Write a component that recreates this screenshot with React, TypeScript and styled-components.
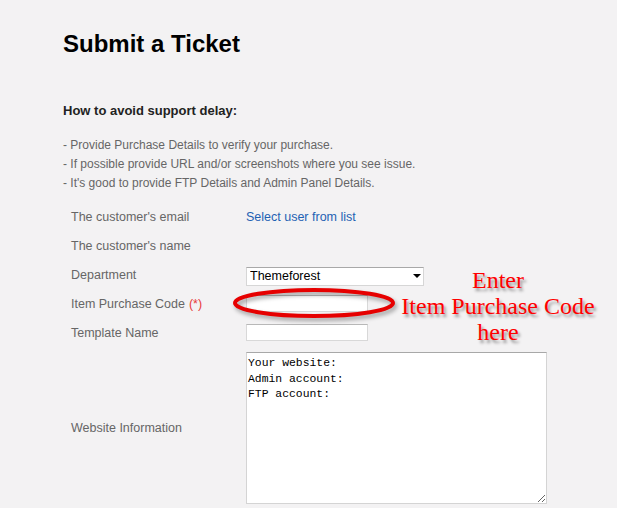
import React from "react";
import styled, { createGlobalStyle } from "styled-components";

const GlobalStyle = createGlobalStyle`
  html, body { margin: 0; padding: 0; background: #f3f2f3; }
  body { font-family: "Liberation Sans", Arial, sans-serif; }
  * { box-sizing: border-box; }
`;

const Page = styled.div`
  width: 617px;
  height: 508px;
  overflow: hidden;
  background: #f3f2f3;
  padding: 30px 0 0 63px;
  position: relative;
`;

const Title = styled.h1`
  margin: 0;
  font-size: 24px;
  line-height: 28px;
  font-weight: bold;
  color: #000;
`;

const SubTitle = styled.h2`
  margin: 45px 0 0;
  font-size: 13px;
  line-height: 16px;
  font-weight: bold;
  color: #222;
`;

const Tips = styled.ul`
  list-style: none;
  margin: 16.5px 0 0;
  padding: 0;
  font-size: 12px;
  line-height: 19px;
  color: #666;
`;

const Form = styled.div`
  position: relative;
  margin-top: 9.5px;
  padding-left: 8px;
  display: grid;
  grid-template-columns: 175px 1fr;
  grid-auto-rows: 29px;
`;

const Label = styled.div`
  display: flex;
  align-items: center;
  font-size: 12.5px;
  color: #666;
`;

const Required = styled.span`
  color: #e83a3a;
  margin-left: 4px;
`;

const Value = styled.div`
  display: flex;
  align-items: center;
`;

const Link = styled.a`
  font-size: 12.5px;
  color: #1f62b3;
  text-decoration: none;
`;

const SelectWrap = styled.div`
  position: relative;
  width: 178px;
  height: 19px;
  margin-top: 2px;
  &::after {
    content: "";
    position: absolute;
    right: 3px;
    top: 8px;
    border-left: 4px solid transparent;
    border-right: 4px solid transparent;
    border-top: 4px solid #000;
  }
`;

const Select = styled.select`
  appearance: none;
  width: 100%;
  height: 100%;
  margin: 0;
  padding: 0 0 0 3px;
  background: #fff;
  border: 1px solid #d6d6d6;
  border-top-color: #a8a8a8;
  border-radius: 0;
  font-family: "Liberation Sans", Arial, sans-serif;
  font-size: 12.5px;
  color: #000;
`;

const TextInput = styled.input`
  width: 122px;
  height: 17px;
  margin: 0;
  padding: 0 3px;
  background: #fff;
  border: 1px solid #d8d8d8;
  border-top-color: #b8b8b8;
  font-size: 12px;
`;

const AreaLabel = styled(Label)`
  padding-top: 5px;
`;

const AreaCell = styled.div`
  padding-top: 5px;
`;

const TextArea = styled.textarea`
  display: block;
  width: 301px;
  height: 152px;
  margin: 0;
  padding: 3px 1px;
  background: #fff;
  border: 1px solid #d4d4d4;
  border-top-color: #a8a8a8;
  font-family: "Liberation Mono", "Courier New", monospace;
  font-size: 11.4px;
  line-height: 15.5px;
  color: #000;
  resize: both;
`;

const TallRow = styled.div`
  grid-column: 1 / -1;
  display: grid;
  grid-template-columns: 175px 1fr;
`;

const Ring = styled.svg`
  position: absolute;
  left: 170px;
  top: 86px;
  overflow: visible;
  filter: drop-shadow(2px 3px 2px rgba(0, 0, 0, 0.35));
`;

const Callout = styled.div`
  position: absolute;
  left: 337px;
  top: 65px;
  width: 196px;
  text-align: center;
  font-family: "Liberation Serif", "Times New Roman", serif;
  font-size: 24px;
  line-height: 26px;
  color: #f00;
  text-shadow: 2px 3px 3px rgba(0, 0, 0, 0.4);
  white-space: nowrap;
`;

export default function App() {
  return (
    <>
      <GlobalStyle />
      <Page>
        <Title>Submit a Ticket</Title>
        <SubTitle>How to avoid support delay:</SubTitle>
        <Tips>
          <li>- Provide Purchase Details to verify your purchase.</li>
          <li>- If possible provide URL and/or screenshots where you see issue.</li>
          <li>- It's good to provide FTP Details and Admin Panel Details.</li>
        </Tips>
        <Form>
          <Label>The customer's email</Label>
          <Value>
            <Link href="#">Select user from list</Link>
          </Value>
          <Label>The customer's name</Label>
          <Value />
          <Label>Department</Label>
          <Value>
            <SelectWrap>
              <Select defaultValue="Themeforest">
                <option>Themeforest</option>
              </Select>
            </SelectWrap>
          </Value>
          <Label>
            Item Purchase Code<Required>(*)</Required>
          </Label>
          <Value>
            <TextInput type="text" />
          </Value>
          <Label>Template Name</Label>
          <Value>
            <TextInput type="text" />
          </Value>
          <TallRow>
            <AreaLabel>Website Information</AreaLabel>
            <AreaCell>
              <TextArea
                defaultValue={"Your website:\nAdmin account:\nFTP account:"}
              />
            </AreaCell>
          </TallRow>
          <Ring width="162" height="30" viewBox="0 0 162 30">
            <ellipse
              cx="81"
              cy="15"
              rx="79"
              ry="13"
              fill="none"
              stroke="#e60000"
              strokeWidth="4"
            />
          </Ring>
          <Callout>
            Enter
            <br />
            Item Purchase Code
            <br />
            here
          </Callout>
        </Form>
      </Page>
    </>
  );
}
